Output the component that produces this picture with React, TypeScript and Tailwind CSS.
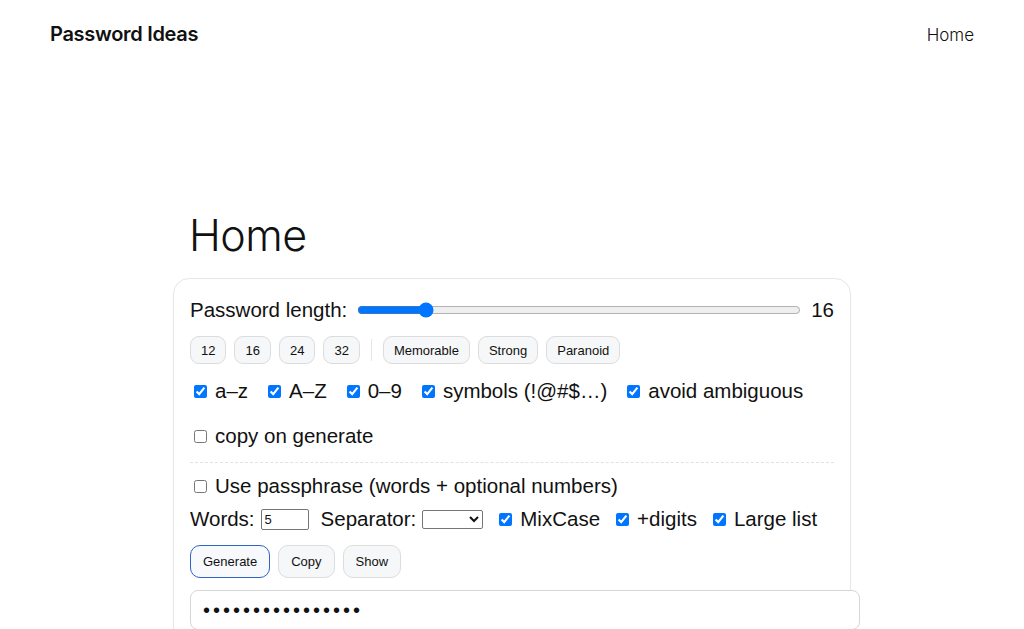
import { useState } from 'react';

const chipClass =
  'h-[28px] px-[10px] rounded-[9px] border border-[#dcdcdc] bg-[#f6f7f8] text-[13px] text-[#111] leading-none';

const actionBase = 'h-[33px] px-3 rounded-[10px] border text-[13px] text-[#111] leading-none';

function Check({ label, checked = true }: { label: string; checked?: boolean }) {
  const [on, setOn] = useState(checked);
  return (
    <label className="flex items-center whitespace-nowrap">
      <input
        type="checkbox"
        checked={on}
        onChange={() => setOn(!on)}
        className="w-[13px] h-[13px] ml-[4px] mr-[8px] accent-[#0075ff]"
      />
      {label}
    </label>
  );
}

export default function App() {
  const [length, setLength] = useState(16);

  return (
    <div className="min-h-screen bg-white text-[#111] font-['Liberation_Sans',Arial,sans-serif]">
      {/* Header */}
      <header className="h-[68px] px-[50px] flex items-center justify-between font-['Inter',sans-serif]">
        <span className="text-[20px] font-semibold tracking-[-0.3px] text-[#111]">Password Ideas</span>
        <nav className="pt-[3px] text-[17px] font-light text-[#111]">Home</nav>
      </header>

      <main className="w-[678px] mx-auto pt-[137px]">
        <h1 className="pl-[16px] font-['Inter',sans-serif] font-light text-[43px] leading-[60px] tracking-[-0.5px] mb-[13px]">
          Home
        </h1>

        <section className="border border-[#e6e6e6] rounded-[16px] px-[16px] pt-[15px] pb-6 text-[20.5px]">
          {/* Length */}
          <div className="flex items-center h-8">
            <span>Password length:</span>
            <input
              type="range"
              min={8}
              max={64}
              value={length}
              onChange={(e) => setLength(Number(e.target.value))}
              className="flex-1 ml-[10px] mr-[10px] accent-[#0075ff]"
            />
            <span>{length}</span>
          </div>

          {/* Presets */}
          <div className="flex items-center gap-2 mt-[10px]">
            <button className={chipClass}>12</button>
            <button className={chipClass}>16</button>
            <button className={chipClass}>24</button>
            <button className={chipClass}>32</button>
            <span className="w-px h-[22px] bg-[#e6e6e6] mx-[3px]" />
            <button className={chipClass}>Memorable</button>
            <button className={chipClass}>Strong</button>
            <button className={chipClass}>Paranoid</button>
          </div>

          {/* Character sets */}
          <div className="flex items-center gap-x-[16px] h-6 mt-[15px]">
            <Check label="a–z" />
            <Check label="A–Z" />
            <Check label="0–9" />
            <Check label="symbols (!@#$…)" />
            <Check label="avoid ambiguous" />
          </div>
          <div className="flex items-center h-6 mt-[21px]">
            <Check label="copy on generate" checked={false} />
          </div>

          <div className="mt-[14px] border-t border-dashed border-[#e2e2e2]" />

          {/* Passphrase */}
          <div className="flex items-center h-6 mt-[11px]">
            <Check label="Use passphrase (words + optional numbers)" checked={false} />
          </div>
          <div className="flex items-center gap-x-[12px] h-6 mt-[9px]">
            <label className="flex items-center gap-[6px]">
              Words:
              <input
                type="number"
                defaultValue={5}
                className="w-[48px] h-[21px] border border-[#767676] rounded-[2px] px-[3px] text-[13px] bg-white [appearance:textfield]"
              />
            </label>
            <label className="flex items-center gap-[6px]">
              Separator:
              <select className="w-[61px] h-[19px] border border-[#767676] rounded-[2px] text-[13px] bg-white">
                <option value=""></option>
                <option value="-">-</option>
                <option value=".">.</option>
              </select>
            </label>
            <Check label="MixCase" />
            <Check label="+digits" />
            <Check label="Large list" />
          </div>

          {/* Actions */}
          <div className="flex items-center gap-2 mt-[14px]">
            <button className={`${actionBase} border-[#2f63c8] bg-[#f7f9fc]`}>Generate</button>
            <button className={`${actionBase} border-[#dcdcdc] bg-[#f6f7f8]`}>Copy</button>
            <button className={`${actionBase} border-[#dcdcdc] bg-[#f6f7f8]`}>Show</button>
          </div>

          <input
            type="password"
            readOnly
            value="abcdefghijklmnop"
            className="box-content w-full mt-[12px] h-[26px] py-[6px] px-3 border border-[#d6d6d6] rounded-[8px] text-[20px] tracking-[3px] bg-white"
          />
        </section>
      </main>
    </div>
  );
}
